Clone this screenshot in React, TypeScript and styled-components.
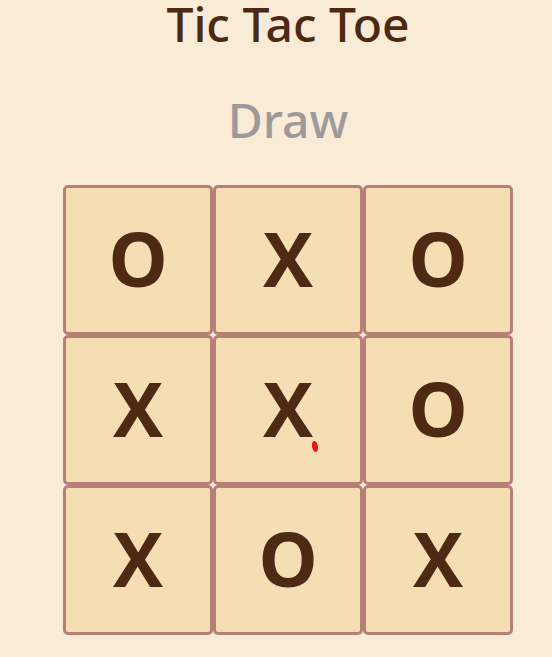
import React from "react";
import styled, { createGlobalStyle } from "styled-components";

const GlobalStyle = createGlobalStyle`
  html, body {
    margin: 0;
    padding: 0;
    background: #faebd7;
    overflow: hidden;
  }
  body {
    font-family: "Open Sans", "Liberation Sans", sans-serif;
  }
`;

const Page = styled.main`
  position: relative;
  display: flex;
  flex-direction: column;
  align-items: center;
  padding-left: 24px;
  min-height: 657px;
  box-sizing: border-box;
`;

const Title = styled.h1`
  margin: 0;
  font-family: "Noto Sans", "Open Sans", sans-serif;
  font-size: 48px;
  line-height: 48px;
  font-weight: 500;
  color: #4b2913;
`;

const Status = styled.h2`
  margin: 48px 0 0;
  font-family: "Noto Sans", "Open Sans", sans-serif;
  font-size: 48px;
  line-height: 48px;
  font-weight: 500;
  color: #9e9a9b;
`;

const Board = styled.div`
  margin-top: 41px;
  display: grid;
  grid-template-columns: repeat(3, 150px);
  grid-template-rows: repeat(3, 150px);
`;

const Cell = styled.button`
  box-sizing: border-box;
  width: 150px;
  height: 150px;
  margin: 0;
  padding: 0 0 4px;
  border: 3px solid #b78076;
  border-radius: 5px;
  background: #f5deb3;
  color: #4e2a15;
  font-family: "Open Sans", "Liberation Sans", sans-serif;
  font-size: 75px;
  font-weight: 700;
  line-height: 1;
  display: flex;
  align-items: center;
  justify-content: center;
  cursor: pointer;
`;

const Mark = styled.span`
  position: absolute;
  left: 312px;
  top: 441px;
  width: 6px;
  height: 11px;
  border-radius: 50%;
  background: #e3191c;
  transform: rotate(-10deg);
  pointer-events: none;
`;

const cells = ["O", "X", "O", "X", "X", "O", "X", "O", "X"];

export default function App() {
  return (
    <>
      <GlobalStyle />
      <Page>
        <Title>Tic Tac Toe</Title>
        <Status>Draw</Status>
        <Board>
          {cells.map((c, i) => (
            <Cell key={i}>{c}</Cell>
          ))}
        </Board>
        <Mark />
      </Page>
    </>
  );
}
